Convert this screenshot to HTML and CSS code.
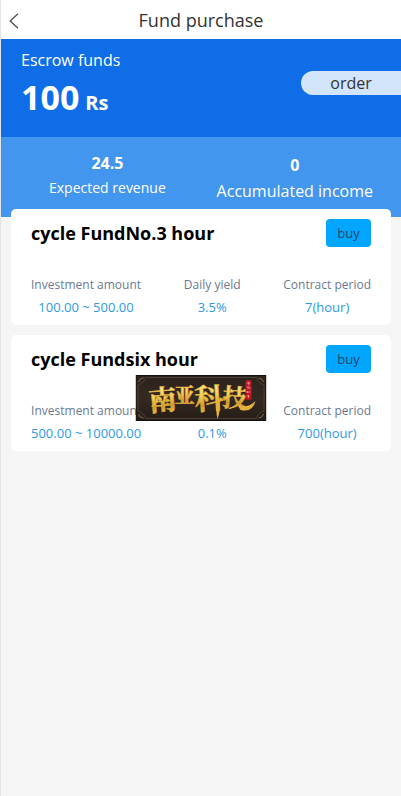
FILE: index.html
```html
<!DOCTYPE html>
<html lang="en">

<head>
  <meta charset="UTF-8">
  <meta name="viewport" content="width=device-width, initial-scale=1.0">
  <title>Fund purchase</title>
  <link rel="stylesheet" href="styles.css">
</head>

<body>
  <header class="navbar">
    <a href="#" class="back" aria-label="Back">
      <svg width="10" height="16" viewBox="0 0 10 16" fill="none" stroke="#555" stroke-width="1.4">
        <path d="M9 0.7L1.2 8L9 15.3" />
      </svg>
    </a>
    <h1>Fund purchase</h1>
  </header>

  <main>
    <section class="balance">
      <div>
        <p class="balance-label">Escrow funds</p>
        <p class="balance-amount">100<span>Rs</span></p>
      </div>
      <a href="#" class="order">order</a>
    </section>

    <section class="summary">
      <div class="summary-item">
        <strong>24.5</strong>
        <span>Expected revenue</span>
      </div>
      <div class="summary-item large">
        <strong>0</strong>
        <span>Accumulated income</span>
      </div>
    </section>

    <section class="funds">
      <article class="card">
        <div class="card-head">
          <h2>cycle FundNo.3 hour</h2>
          <button type="button">buy</button>
        </div>
        <dl>
          <div>
            <dt>Investment amount</dt>
            <dd>100.00 ~ 500.00</dd>
          </div>
          <div>
            <dt>Daily yield</dt>
            <dd>3.5%</dd>
          </div>
          <div>
            <dt>Contract period</dt>
            <dd>7(hour)</dd>
          </div>
        </dl>
      </article>

      <article class="card">
        <div class="card-head">
          <h2>cycle Fundsix hour</h2>
          <button type="button">buy</button>
        </div>
        <dl>
          <div>
            <dt>Investment amount</dt>
            <dd>500.00 ~ 10000.00</dd>
          </div>
          <div>
            <dt>Daily yield</dt>
            <dd>0.1%</dd>
          </div>
          <div>
            <dt>Contract period</dt>
            <dd>700(hour)</dd>
          </div>
        </dl>
      </article>
    </section>
  </main>

  <div class="watermark">
    <svg width="131" height="46" viewBox="0 0 131 46">
      <defs>
        <linearGradient id="gold" x1="0" y1="0" x2="0" y2="1">
          <stop offset="0" stop-color="#fff0a0" />
          <stop offset="0.45" stop-color="#f7d35e" />
          <stop offset="0.7" stop-color="#d39a26" />
          <stop offset="1" stop-color="#f5cf62" />
        </linearGradient>
        <linearGradient id="plate" x1="0" y1="0" x2="0" y2="1">
          <stop offset="0" stop-color="#2b221c" />
          <stop offset="0.5" stop-color="#352a22" />
          <stop offset="1" stop-color="#241c17" />
        </linearGradient>
      </defs>
      <rect width="131" height="46" fill="url(#plate)" />
      <!-- frame with notched corners -->
      <rect x="0.5" y="0.5" width="130" height="45" fill="none" stroke="#151110" />
      <path d="M10 2.5H121Q122 8 128.5 10V36Q122 38 121 43.5H10Q9 38 2.5 36V10Q9 8 10 2.5Z" fill="none" stroke="#4b4035" />
      <path d="M3 7Q4 3 8 3M123 3Q127 3 128 7M3 39Q4 43 8 43M123 43Q127 43 128 39" fill="none" stroke="#81715c" />
      <g class="brand" fill="url(#gold)" stroke="#e3b23f" stroke-width="0.6">
        <text x="13" y="35" font-size="28" transform="rotate(-5 28 25)">南</text>
        <text x="39" y="28" font-size="20">亚</text>
        <text x="59" y="34" font-size="29" transform="rotate(-4 74 24)">科</text>
        <text x="87" y="32" font-size="25" transform="rotate(4 100 25)">技</text>
      </g>
      <!-- brush tails -->
      <path d="M15 32Q20 28 21 21L23 21Q24 30 15 32ZM81 24L84 23Q85 38 82 44Q80 36 81 24ZM102 30Q112 34 120 26Q117 38 105 35Z" fill="#e3b23f" />
      <!-- red seal -->
      <rect x="110" y="5" width="6" height="20" rx="2" fill="#bd1726" />
      <path d="M111 8h4M113 7v3M111 12h3M112 13h3M111 17h4M112 16v2M111 21h3M113 20v3" stroke="#f0a6a0" stroke-width="0.7" />
    </svg>
  </div>
</body>

</html>
```
FILE: styles.css
```css
* {
  box-sizing: border-box;
}

body {
  margin: 0;
  min-height: 100vh;
  border-left: 1px solid #e4e4e4;
  background-color: #f5f5f5;
  font-family: "Segoe UI", "Open Sans", "Noto Sans", sans-serif;
  color: #333;
}

h1,
h2,
p,
dl,
dd {
  margin: 0;
}

a {
  color: inherit;
  text-decoration: none;
}

.navbar {
  display: grid;
  grid-template-columns: 40px 1fr 40px;
  align-items: center;
  height: 39px;
  background-color: #fff;
}

.back {
  display: flex;
  padding: 3px 8px 0;
}

.navbar h1 {
  font-size: 18px;
  font-weight: 400;
  line-height: 38px;
  text-align: center;
}

.balance {
  display: flex;
  justify-content: space-between;
  align-items: flex-start;
  height: 98px;
  padding: 10px 0 0 20px;
  background-color: #106de8;
  color: #fff;
}

.balance-label {
  font-size: 16px;
  line-height: 22px;
}

.balance-amount {
  display: flex;
  align-items: baseline;
  gap: 6px;
  font-size: 34px;
  font-weight: 700;
  line-height: 52px;
}

.balance-amount span {
  font-size: 20px;
  line-height: 28px;
}

.order {
  width: 100px;
  margin-top: 22px;
  border-radius: 12px 0 0 12px;
  background-color: #d2e5fb;
  color: #333;
  font-size: 16px;
  line-height: 24px;
  text-align: center;
}

.summary {
  display: flex;
  justify-content: space-between;
  height: 80px;
  padding: 14px 28px 0 48px;
  background-color: #4396ee;
  color: #fff;
}

.summary-item {
  display: flex;
  flex-direction: column;
  align-items: center;
  font-size: 14px;
  line-height: 26px;
}

.summary-item strong {
  font-size: 16px;
  line-height: 24px;
}

.summary-item.large {
  font-size: 16px;
  line-height: 24px;
}

.summary-item.large strong {
  line-height: 28px;
}

.funds {
  display: flex;
  flex-direction: column;
  gap: 10px;
  margin-top: -8px;
  padding: 0 10px;
}

.card {
  padding: 10px 20px 7px;
  border-radius: 5px;
  background-color: #fff;
}

.card-head {
  display: flex;
  justify-content: space-between;
  align-items: center;
  margin-bottom: 27px;
}

.card h2 {
  color: #000;
  font-size: 18px;
  font-weight: 700;
  line-height: 28px;
}

.card button {
  width: 45px;
  height: 28px;
  padding: 0;
  border: none;
  border-radius: 4px;
  background-color: #00a6ff;
  color: #27455f;
  font-family: inherit;
  font-size: 13px;
  cursor: pointer;
}

.card dl {
  display: flex;
  justify-content: space-between;
  font-size: 13px;
  line-height: 22px;
  text-align: center;
}

.card dt {
  color: #6b7a90;
  font-size: 12px;
}

.card dd {
  color: #2d9ae3;
}

/* brand plate floats at the middle of the screen */
.watermark {
  position: fixed;
  top: 50%;
  left: 50%;
  transform: translate(-50%, -50%);
}

.watermark svg {
  display: block;
}

.brand {
  font-family: "Noto Serif CJK SC", "Noto Sans CJK SC", sans-serif;
  font-weight: 700;
}
```
